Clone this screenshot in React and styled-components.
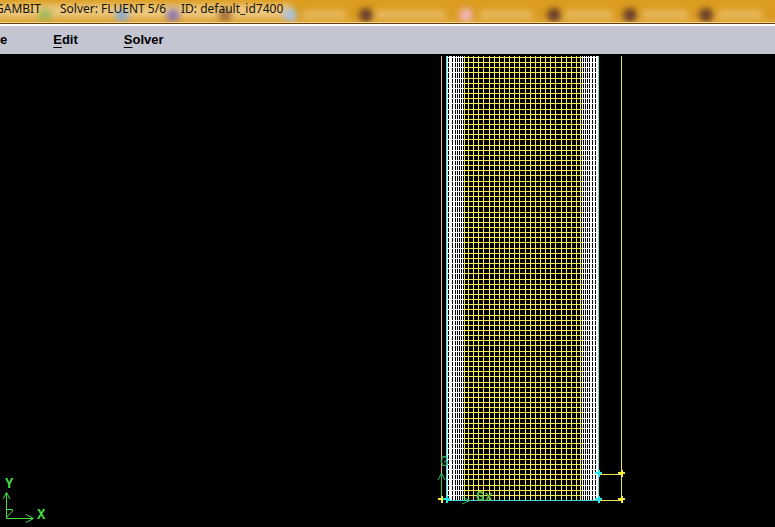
import React from "react";
import styled, { createGlobalStyle } from "styled-components";

const GlobalStyle = createGlobalStyle`
  body { margin: 0; background: #000; }
  * { box-sizing: border-box; }
`;

const Window = styled.main`
  display: flex;
  flex-direction: column;
  min-height: 100vh;
  overflow: hidden;
  background: #000;
`;

const TitleBar = styled.header`
  position: relative;
  height: 26px;
  overflow: hidden;
  background: linear-gradient(#dc9d20, #da9a1e 60%, #dfa539);
  border-bottom: 2px solid #fffdf5;
  box-shadow: inset 0 -1px #65400c, inset 0 -2px #f5d68c;
`;

const Glass = styled.svg`
  position: absolute;
  left: 0;
  top: 0;
  width: 100%;
  height: 22px;
`;

const Title = styled.h1`
  position: relative;
  display: flex;
  margin: 0 0 0 -5px;
  font: 400 12px/18px "Noto Sans", "Open Sans", sans-serif;
  color: #16130c;
  white-space: nowrap;
`;

const TitlePart = styled.span`
  min-width: ${(p) => p.$width || 0}px;
`;

const MenuBar = styled.nav`
  display: flex;
  align-items: center;
  gap: 46px;
  height: 28px;
  background: #c3c5d1;
  overflow: hidden;
`;

const MenuButton = styled.button`
  flex: none;
  padding: 0;
  border: 0;
  background: none;
  color: #000;
  font: 700 13px/16px "Liberation Sans", Arial, sans-serif;
  text-align: left;
`;

const Mnemonic = styled.span`
  text-decoration: underline;
  text-decoration-thickness: 1px;
  text-underline-offset: 3px;
`;

const Viewport = styled.section`
  flex: 1;
`;

const Drawing = styled.svg`
  display: block;
  width: 100%;
  height: auto;
`;

const AxisText = styled.text`
  font: ${(p) => (p.$bold ? 700 : 400)} 14px "Liberation Mono", monospace;
  fill: ${(p) => p.$color || "#45dc45"};
`;

const tabs = [
  ["#a3b85a", 45, 0, 0],
  ["#8fb0cf", 122, 130, 160],
  ["#8d78b4", 173, 181, 216],
  ["#a8713a", 225, 233, 278],
  ["#a9c5e4", 290, 303, 346],
  ["#673c2c", 366, 376, 446],
  ["#f0b5bb", 466, 480, 533],
  ["#673c2c", 554, 565, 612],
  ["#673c2c", 630, 642, 688],
  ["#673c2c", 706, 718, 762],
];

const top = 57;
const bottom = 500;
const rows = Array.from({ length: 87 }, (_, i) => Math.round(top + (i * (bottom - top)) / 86));
const columns = Array.from({ length: 22 }, (_, i) => Math.round(468 + (i * 108) / 21));
const leftBands = [[449, 3], [453, 2], [456, 1], [458, 1], [460, 1], [462, 1]];
const rightBands = [[582, 1], [584, 1], [586, 1], [588, 1], [590, 2], [593, 2], [596, 2]];

function Mesh() {
  return (
    <g shapeRendering="crispEdges">
      {rows.map((y) => (
        <g key={y}>
          <rect x="464" y={y} width="118" height="1" fill="#f4ea52" />
          <rect x="448" y={y} width="16" height="1" fill="#fff" />
          <rect x="582" y={y} width="16" height="1" fill="#fff" />
        </g>
      ))}
      {[464, ...columns, 580].map((x) => (
        <rect key={x} x={x} y="56" width="1" height="445" fill="#f4ea52" />
      ))}
      {[...leftBands, ...rightBands].map(([x, w]) => (
        <rect key={x} x={x} y="56" width={w} height="445" fill="#fff" />
      ))}
      <path d="M446.5 56V500M598.5 56V500" stroke="#67d9df" />
      <path d="M447.5 56V500" stroke="#d5ffff" />
      <path d="M446 500.5H599" stroke="#48d5d5" />
    </g>
  );
}

function Node({ x, y, color }) {
  return <path d={`M${x - 4} ${y}h7M${x} ${y - 3}v7`} stroke={color} strokeWidth="2" />;
}

export default function App() {
  return (
    <>
      <GlobalStyle />
      <Window>
        <TitleBar>
          <Glass viewBox="0 0 775 22" preserveAspectRatio="none" aria-hidden="true">
            <defs>
              <filter id="soft" x="-20%" y="-100%" width="140%" height="300%">
                <feGaussianBlur stdDeviation="3" />
              </filter>
            </defs>
            <g filter="url(#soft)">
              <rect x="-5" y="4" width="296" height="14" fill="#efcf8b" opacity=".85" />
              {tabs.map(([color, x, from, to]) => (
                <g key={x}>
                  <circle cx={x} cy="15" r="7" fill={color} />
                  <rect x={from} y="10" width={to - from} height="9" fill="#efca80" opacity=".65" />
                </g>
              ))}
            </g>
          </Glass>
          <Title>
            <TitlePart $width={65}>GAMBIT</TitlePart>
            <TitlePart $width={121}>Solver: FLUENT 5/6</TitlePart>
            <TitlePart>ID: default_id7400</TitlePart>
          </Title>
        </TitleBar>
        <MenuBar>
          <MenuButton type="button" aria-label="File">e</MenuButton>
          <MenuButton type="button"><Mnemonic>E</Mnemonic>dit</MenuButton>
          <MenuButton type="button"><Mnemonic>S</Mnemonic>olver</MenuButton>
        </MenuBar>
        <Viewport aria-label="Mesh view">
          <Drawing viewBox="0 54 775 473" role="img" aria-label="Mesh with coordinate axes">
            <Mesh />
            <g fill="none" stroke="#e9e45c" shapeRendering="crispEdges">
              <path d="M441.5 56V499" stroke="#d8b95c" />
              <path d="M621.5 56V500M599 474.5H622M599 500.5H622" />
            </g>
            <g fill="none" stroke="#35bd5c">
              <path d="M441.5 499V473M438 480L441.5 473L445 480M462 497L470 500.5L462 504" />
            </g>
            <AxisText x="440" y="466" $color="#35a958">G</AxisText>
            <AxisText x="476" y="501" $bold $color="#58bd48">Gx</AxisText>
            <g shapeRendering="crispEdges">
              <Node x={442} y={499} color="#f5ee32" />
              <Node x={447} y={499} color="#26e5ec" />
              <Node x={599} y={473} color="#26e5ec" />
              <Node x={599} y={499} color="#26e5ec" />
              <Node x={622} y={473} color="#f5ee32" />
              <Node x={622} y={499} color="#f5ee32" />
            </g>
            <path
              d="M6.5 518.5V492.5M3 499L6.5 492.5L10 499M6.5 518.5H33M26 514.5L33.5 518.5L26 522.5"
              fill="none"
              stroke="#43df43"
            />
            <path d="M7 509.5H12.5V511L7 517" fill="none" stroke="#43df43" />
            <AxisText x="5" y="488" $bold>Y</AxisText>
            <AxisText x="37" y="519" $bold>X</AxisText>
          </Drawing>
        </Viewport>
      </Window>
    </>
  );
}
